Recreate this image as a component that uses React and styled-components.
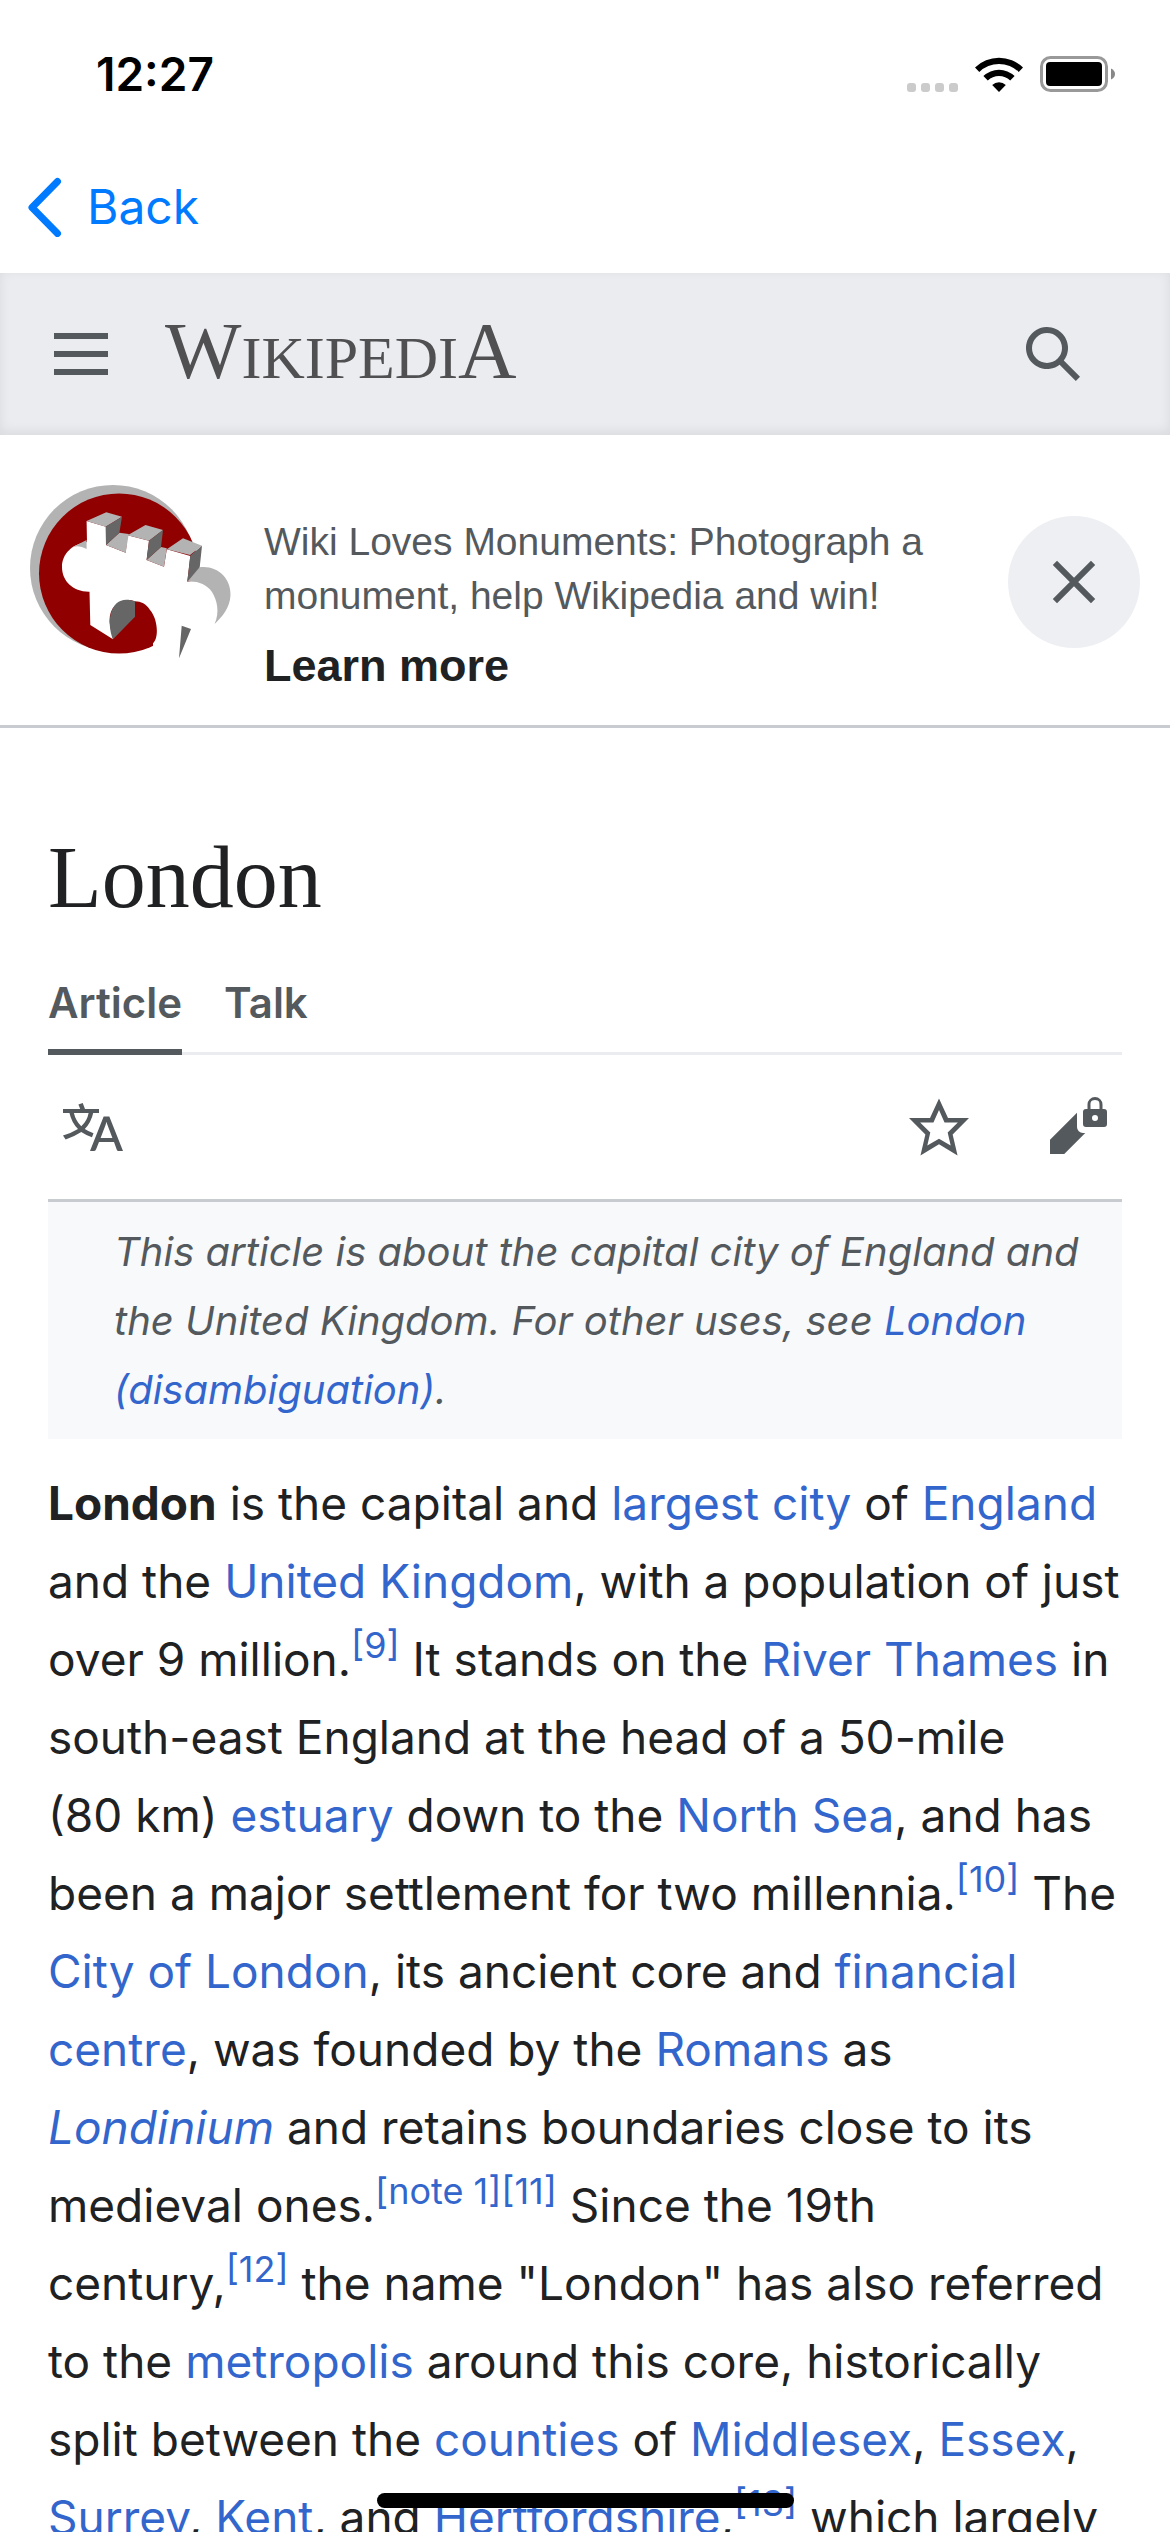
import React from "react";
import styled, { createGlobalStyle } from "styled-components";

const GlobalStyle = createGlobalStyle`
  *, *::before, *::after { box-sizing: border-box; }
  body {
    margin: 0;
    background: #fff;
    color: #202122;
    font-family: Inter, "Liberation Sans", sans-serif;
  }
  button {
    margin: 0;
    padding: 0;
    border: 0;
    background: none;
    color: inherit;
    font: inherit;
    cursor: pointer;
  }
`;

const Screen = styled.div`
  display: flex;
  flex-direction: column;
  height: 100vh;
  overflow: hidden;
  background: #fff;
`;

const StatusBar = styled.div`
  flex: none;
  display: flex;
  align-items: center;
  justify-content: space-between;
  height: 147px;
  padding: 0 54px 0 96px;
  color: #000;
`;

const Clock = styled.time`
  font-size: 46px;
  line-height: 54px;
  font-weight: 600;
`;

const StatusIcons = styled.div`
  display: flex;
  align-items: flex-end;
  gap: 17px;
`;

const NavBar = styled.nav`
  flex: none;
  display: flex;
  align-items: center;
  height: 126px;
  padding: 0 27px 6px;
`;

const BackButton = styled.button`
  display: flex;
  align-items: center;
  gap: 24px;
  color: #007aff;
  font-size: 48px;
  line-height: 66px;
`;

const SiteHeader = styled.header`
  flex: none;
  display: flex;
  align-items: center;
  height: 162px;
  padding: 0 87px 0 51px;
  background: #eaecf0;
  box-shadow: inset 0 -3px 12px rgba(0, 0, 0, 0.08);
  color: #54595d;
`;

const IconButton = styled.button`
  display: block;
  width: 60px;
  height: 60px;
  color: #54595d;
  svg {
    display: block;
    width: 60px;
    height: 60px;
    fill: currentColor;
  }
`;

const Wordmark = styled.a`
  flex: 1;
  padding-left: 54px;
  color: #505052;
  font-family: "Liberation Serif", serif;
  font-size: 60px;
  line-height: 84px;
  text-decoration: none;
`;

const BigCap = styled.span`
  font-size: 81px;
`;

const Banner = styled.section`
  flex: none;
  display: flex;
  align-items: flex-start;
  padding: 50px 30px 32px;
  border-bottom: 3px solid #c8ccd1;
  font-family: "Liberation Sans", sans-serif;
`;

const BannerText = styled.div`
  flex: 1;
  padding: 30px 24px 0 32px;
`;

const BannerCopy = styled.p`
  max-width: 700px;
  margin: 0 0 16px;
  color: #54595d;
  font-size: 39px;
  line-height: 54px;
`;

const BannerLink = styled.a`
  display: block;
  color: #202122;
  font-size: 45px;
  line-height: 54px;
  font-weight: 700;
  text-decoration: none;
`;

const CloseButton = styled(IconButton)`
  display: grid;
  place-items: center;
  width: 132px;
  height: 132px;
  margin-top: 31px;
  border-radius: 50%;
  background: #eeeff3;
`;

const Article = styled.main`
  flex: 1;
  min-height: 0;
  overflow: hidden;
  padding: 96px 48px 0;
`;

const Title = styled.h1`
  margin: 0;
  font-family: "Liberation Serif", serif;
  font-size: 88px;
  line-height: 108px;
  font-weight: 400;
`;

const Tabs = styled.nav`
  display: flex;
  gap: 42px;
  margin-top: 33px;
  border-bottom: 3px solid #eaecf0;
`;

const Tab = styled.a`
  height: 90px;
  margin-bottom: -3px;
  padding-top: 8px;
  border-bottom: 6px solid ${(p) => (p.$active ? "#54595d" : "transparent")};
  color: #54595d;
  font-size: 42px;
  line-height: 60px;
  font-weight: 600;
  text-decoration: none;
`;

const Toolbar = styled.div`
  display: flex;
  align-items: center;
  gap: 78px;
  height: 147px;
  padding: 0 15px;
  border-bottom: 3px solid #c8ccd1;
`;

const Spacer = styled.div`
  flex: 1;
`;

const Link = styled.a`
  color: #3366cc;
  text-decoration: none;
`;

const Hatnote = styled.div`
  padding: 15px 21px 15px 66px;
  background: #f8f9fa;
  color: #54595d;
  font-size: 40px;
  line-height: 69px;
  font-style: italic;
`;

const Paragraph = styled.p`
  margin: 25px 0 0;
  font-size: 46px;
  line-height: 78px;
`;

const Ref = styled.sup`
  font-size: 36px;
  line-height: 1;
  vertical-align: 18px;
`;

const NoBreak = styled.span`
  white-space: nowrap;
`;

const HomeIndicator = styled.div`
  position: fixed;
  bottom: 24px;
  left: 50%;
  width: 417px;
  height: 15px;
  margin-left: -208px;
  border-radius: 8px;
  background: #000;
`;

function Cite({ children }) {
  return (
    <Ref>
      <Link href="#ref">[{children}]</Link>
    </Ref>
  );
}

function SignalDots() {
  return (
    <svg width="51" height="9" viewBox="0 0 51 9" fill="#cbcbcb">
      {[0, 14, 28, 42].map((x) => (
        <rect key={x} x={x} width="9" height="9" rx="3" />
      ))}
    </svg>
  );
}

function Wifi() {
  return (
    <svg width="48" height="36" viewBox="0 0 48 36">
      <path d="M0 11.5A34.5 34.5 0 0 1 48 11.5L43.7 15.9A28.2 28.2 0 0 0 4.3 15.9Z" />
      <path d="M8.4 20.1A22.3 22.3 0 0 1 39.6 20.1L35.2 24.5A16 16 0 0 0 12.8 24.5Z" />
      <path d="M17.2 29A9.8 9.8 0 0 1 30.8 29L24 36Z" />
    </svg>
  );
}

function Battery() {
  return (
    <svg width="76" height="36" viewBox="0 0 76 36">
      <rect x="1.5" y="1.5" width="65" height="33" rx="9" fill="none" stroke="#999" strokeWidth="3" />
      <rect x="6" y="6" width="56" height="24" rx="4" />
      <path d="M71 12.5Q75 14.5 75 18T71 23.5Z" fill="#888" />
    </svg>
  );
}

function MonumentsLogo() {
  return (
    <svg width="202" height="175" viewBox="30 25 202 175" role="img" aria-label="Wiki Loves Monuments">
      <circle cx="113" cy="108" r="83" fill="#b3b3b3" />
      <circle cx="119" cy="113.5" r="80" fill="#900000" />
      <path
        fill="#fff"
        d="M86.6 61 106 66.7V85L125.7 92.7 127.6 75.3 149 80.7 146.6 100 164 106.7 166.8 89.3 190.3 96 187.3 121.7 250 110V210H153V183.3C159 178 158 159 150 150C146 144 141 141.3 135 141.3C120 136 107 148 110 165L113 179.3 90.3 165 89.5 131.7C73 132 62 121 62 107C62 94 72 84 87 82Z"
      />
      <path fill="#b3b3b3" d="M86.6 61 106.3 52.3 122 56.7 105.6 66.7ZM106 85 119.4 72.7 128.7 74 125.7 92.7ZM127.6 75.3 145.5 65 163 70 149 80.7ZM146.6 100 161 87 166.8 88.3 164 106.7ZM166.8 89.3 183 78.3 202 85.7 190 95ZM71 88 86.6 80V89Q78 84 71 88Z" />
      <path fill="#666" d="M105.6 66.7 122 56.7 119.4 72.7 106 85ZM149 80.7 163 70 161 87 146.6 100ZM190.3 95.5 202 85.7 199.6 108.3 187.3 121.7ZM113 179.3C105 158 112 133 135 141.3V156.7ZM181.7 165.7 191 169 179 198.3Z" />
      <path fill="#b3b3b3" d="M199.6 107.3C217 105 231 118 230.5 135C230 148 222 157 214.6 164C220 152 217 140 212 132C206 124 198 121 187.3 121.7Z" />
    </svg>
  );
}

export default function App() {
  return (
    <>
      <GlobalStyle />
      <Screen>
        <StatusBar>
          <Clock>12:27</Clock>
          <StatusIcons>
            <SignalDots />
            <Wifi />
            <Battery />
          </StatusIcons>
        </StatusBar>

        <NavBar>
          <BackButton type="button">
            <svg width="36" height="60" viewBox="0 0 36 60" fill="none" stroke="currentColor" strokeWidth="7" strokeLinecap="round" strokeLinejoin="round">
              <path d="M30.500 4.500 5 30.500 30.500 56.500" />
            </svg>
            Back
          </BackButton>
        </NavBar>

        <SiteHeader>
          <IconButton type="button" aria-label="Open main menu">
            <svg viewBox="0 0 20 20">
              <path d="M1 3v2h18V3zm0 8h18V9H1zm0 6h18v-2H1z" />
            </svg>
          </IconButton>
          <Wordmark href="#home" aria-label="Wikipedia">
            <BigCap>W</BigCap>IKIPEDI<BigCap>A</BigCap>
          </Wordmark>
          <IconButton type="button" aria-label="Search">
            <svg viewBox="0 0 20 20">
              <path d="M12.2 13.6a7 7 0 1 1 1.4-1.4l5.4 5.4-1.4 1.4zM3 8a5 5 0 1 0 10 0A5 5 0 0 0 3 8" />
            </svg>
          </IconButton>
        </SiteHeader>

        <Banner>
          <MonumentsLogo />
          <BannerText>
            <BannerCopy>
              Wiki Loves Monuments: Photograph a monument, help Wikipedia and win!
            </BannerCopy>
            <BannerLink href="#learn">Learn more</BannerLink>
          </BannerText>
          <CloseButton type="button" aria-label="Close">
            <svg viewBox="0 0 20 20">
              <path d="m4.34 2.93 12.73 12.73-1.41 1.41L2.93 4.35zM17.07 4.34 4.34 17.07l-1.41-1.41L15.66 2.93z" />
            </svg>
          </CloseButton>
        </Banner>

        <Article>
          <Title>London</Title>
          <Tabs>
            <Tab href="#article" $active>Article</Tab>
            <Tab href="#talk">Talk</Tab>
          </Tabs>
          <Toolbar>
            <IconButton type="button" aria-label="Language">
              <svg viewBox="0 0 20 20">
                <path d="M20 18h-1.44a.6.6 0 0 1-.4-.12.8.8 0 0 1-.23-.31L17 15h-5l-1 2.54a.8.8 0 0 1-.22.3.6.6 0 0 1-.4.14H9l4.55-11.47h1.89zm-3.53-4.31L14.89 9.5a12 12 0 0 1-.39-1.24q-.09.37-.19.69l-.19.56-1.58 4.19zm-6.3-1.58a13.4 13.4 0 0 1-2.91-1.41 11.46 11.46 0 0 0 2.81-5.37H12V4H7.31a4 4 0 0 0-.2-.56C6.87 2.79 6.6 2 6.6 2l-1.47.5s.4.89.6 1.5H0v1.33h2.15A11.23 11.23 0 0 0 5 10.7a17.2 17.2 0 0 1-5 2.1q.56.82.87 1.38a23.3 23.3 0 0 0 5.22-2.51 15.6 15.6 0 0 0 3.56 1.77zM3.63 5.33h4.91a8.1 8.1 0 0 1-2.45 4.45 9.1 9.1 0 0 1-2.46-4.45" />
              </svg>
            </IconButton>
            <Spacer />
            <IconButton type="button" aria-label="Watch">
              <svg viewBox="0 0 20 20">
                <path d="M20 7h-7L10 .5 7 7H0l5.46 5.47-1.64 7 6.18-3.7 6.18 3.73-1.63-7zm-10 6.9-3.9 2.3 1-4.4L3.71 8.5h4.44L10 4.3l1.84 4.2h4.44l-3.39 3.3 1 4.4z" />
              </svg>
            </IconButton>
            <IconButton type="button" aria-label="Edit (protected)">
              <svg viewBox="0 0 20 20">
                <path fillRule="evenodd" d="M12 12a2 2 0 0 1-2-2V5.25l-9 9V19h4.75l7-7zm7-8h-.5V2.5a2.5 2.5 0 0 0-5 0V4H13a1 1 0 0 0-1 1v4a1 1 0 0 0 1 1h6a1 1 0 0 0 1-1V5a1 1 0 0 0-1-1m-3 4a1 1 0 1 1 0-2 1 1 0 0 1 0 2m1.5-4h-3V2.75C14.5 2 14.5 1 16 1s1.5 1 1.5 1.75z" />
              </svg>
            </IconButton>
          </Toolbar>
          <Hatnote>
            This article is about the capital city of England and the United Kingdom. For other uses, see{" "}
            <Link href="#disambiguation">London (disambiguation)</Link>.
          </Hatnote>
          <Paragraph>
            <b>London</b> is the capital and <Link href="#largest">largest city</Link> of{" "}
            <Link href="#england">England</Link> and the <Link href="#uk">United Kingdom</Link>, with a
            population of just over 9 million.<Cite>9</Cite> It stands on the{" "}
            <Link href="#thames">River Thames</Link> in south-east England at the head of a 50-mile
            (80&nbsp;km) <Link href="#estuary">estuary</Link> down to the{" "}
            <Link href="#northsea">North Sea</Link>, and has been a major settlement for two
            millennia.<Cite>10</Cite> The <Link href="#city">City of London</Link>, its ancient core and{" "}
            <Link href="#finance">financial centre</Link>, was founded by the{" "}
            <Link href="#romans">Romans</Link> as{" "}
            <Link href="#londinium"><i>Londinium</i></Link> and retains boundaries close to its medieval
            ones.<Cite>note 1</Cite><Cite>11</Cite> Since the 19th{" "}
            <NoBreak>century,<Cite>12</Cite></NoBreak> the name
            "London" has also referred to the <Link href="#metropolis">metropolis</Link> around this
            core, historically split between the <Link href="#counties">counties</Link> of{" "}
            <Link href="#middlesex">Middlesex</Link>, <Link href="#essex">Essex</Link>,{" "}
            <Link href="#surrey">Surrey</Link>, <Link href="#kent">Kent</Link>, and{" "}
            <NoBreak><Link href="#herts">Hertfordshire</Link>,<Cite>13</Cite></NoBreak> which largely
          </Paragraph>
        </Article>
        <HomeIndicator />
      </Screen>
    </>
  );
}
